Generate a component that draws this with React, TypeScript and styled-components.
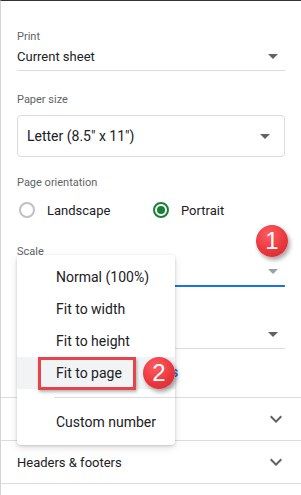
import React from 'react';
import styled, { createGlobalStyle } from 'styled-components';

const GlobalStyle = createGlobalStyle`
  body {
    margin: 0;
    background: #fff;
    font-family: Roboto, "Liberation Sans", Arial, sans-serif;
  }
`;

const Panel = styled.div`
  position: relative;
  width: 301px;
  height: 495px;
  box-sizing: border-box;
  border-top: 1px solid #333;
  border-left: 1px solid #d3d3d3;
  background: #fff;
  overflow: hidden;
  display: flex;
  flex-direction: column;
`;

const Settings = styled.div`
  padding: 28px 16px 0 16px;
`;

const Field = styled.div<{ $top?: number }>`
  margin-top: ${p => p.$top || 0}px;
`;

const Label = styled.div`
  font-size: 11px;
  line-height: 16px;
  color: #5f6368;
`;

const LineSelect = styled.div<{ $focused?: boolean }>`
  display: flex;
  align-items: center;
  justify-content: space-between;
  height: 22px;
  padding-bottom: 3px;
  border-bottom: ${p => (p.$focused ? '2px solid #1a73e8' : '1px solid #dadce0')};
  font-size: 13px;
  color: #202124;
`;

const BoxSelect = styled.div`
  margin-top: 7px;
  height: 42px;
  box-sizing: border-box;
  border: 1px solid #dadce0;
  border-radius: 4px;
  display: flex;
  align-items: center;
  justify-content: space-between;
  padding: 0 14px 0 9px;
  font-size: 14px;
  color: #202124;
`;

const Arrow = styled.span<{ $light?: boolean; $right?: number }>`
  width: 0;
  height: 0;
  margin-right: ${p => p.$right ?? 0}px;
  border-left: 5px solid transparent;
  border-right: 5px solid transparent;
  border-top: 5px solid ${p => (p.$light ? '#9aa0a6' : '#5f6368')};
`;

const RadioRow = styled.div`
  margin-top: 7px;
  height: 24px;
  display: flex;
  align-items: center;
`;

const RadioOption = styled.label`
  width: 134px;
  display: flex;
  align-items: center;
  gap: 12px;
  padding-left: 2px;
  font-size: 13px;
  color: #202124;
`;

const RadioCircle = styled.span<{ $checked?: boolean }>`
  width: 16px;
  height: 16px;
  box-sizing: border-box;
  border-radius: 50%;
  border: 2px solid ${p => (p.$checked ? '#188038' : '#bdc1c6')};
  display: flex;
  align-items: center;
  justify-content: center;
  &::after {
    content: '';
    display: ${p => (p.$checked ? 'block' : 'none')};
    width: 8px;
    height: 8px;
    border-radius: 50%;
    background: #188038;
  }
`;

const Link = styled.div`
  margin-top: 13px;
  line-height: 20px;
  font-size: 14px;
  font-weight: 500;
  color: #1a73e8;
  padding-left: 10px;
`;

const Sections = styled.div`
  margin-top: 15px;
`;

const SectionRow = styled.div`
  height: 43px;
  box-sizing: border-box;
  border-top: 1px solid #dadce0;
  display: flex;
  align-items: center;
  justify-content: space-between;
  padding: 0 13px 0 16px;
  font-size: 13px;
  color: #202124;
`;

const Menu = styled.div`
  position: absolute;
  left: 16px;
  top: 254px;
  width: 158px;
  padding: 6px 0 7px;
  background: #fff;
  border-radius: 4px;
  box-shadow: 0 1px 3px rgba(0, 0, 0, 0.18), 0 3px 8px rgba(0, 0, 0, 0.1);
`;

const MenuItem = styled.div<{ $active?: boolean }>`
  height: 32px;
  line-height: 32px;
  padding-left: 39px;
  font-size: 14px;
  color: #202124;
  background: ${p => (p.$active ? '#f1f3f4' : 'transparent')};
`;

const MenuDivider = styled.div`
  height: 1px;
  margin: 8px 0 8px 37px;
  background: #dadce0;
`;

const Highlight = styled.div`
  position: absolute;
  left: 37px;
  top: 356px;
  width: 98px;
  height: 33px;
  box-sizing: border-box;
  border: 3px solid #e6434b;
  box-shadow: 1px 2px 3px rgba(0, 0, 0, 0.3);
`;

const Badge = styled.div<{ $x: number; $y: number }>`
  position: absolute;
  left: ${p => p.$x}px;
  top: ${p => p.$y}px;
  width: 32px;
  height: 32px;
  border-radius: 50%;
  background: radial-gradient(circle at 40% 30%, #ff5b61 0%, #e8353c 60%, #d42a31 100%);
  box-shadow: 2px 3px 4px rgba(0, 0, 0, 0.35);
  color: #fff;
  font-family: "Liberation Sans", Arial, sans-serif;
  font-size: 24px;
  line-height: 32px;
  text-align: center;
`;

const Chevron = () => (
  <svg width="24" height="24" viewBox="0 0 24 24">
    <path d="M16.59 8.59L12 13.17 7.41 8.59 6 10l6 6 6-6z" fill="#5f6368" />
  </svg>
);

const App: React.FC = () => {
  return (
    <Panel>
      <GlobalStyle />
      <Settings>
        <Field>
          <Label>Print</Label>
          <LineSelect>
            Current sheet
            <Arrow $right={7} />
          </LineSelect>
        </Field>
        <Field $top={21}>
          <Label>Paper size</Label>
          <BoxSelect>
            Letter (8.5" x 11")
            <Arrow />
          </BoxSelect>
        </Field>
        <Field $top={18}>
          <Label>Page orientation</Label>
          <RadioRow>
            <RadioOption>
              <RadioCircle />
              Landscape
            </RadioOption>
            <RadioOption>
              <RadioCircle $checked />
              Portrait
            </RadioOption>
          </RadioRow>
        </Field>
        <Field $top={22}>
          <Label>Scale</Label>
          <LineSelect $focused>
            Normal (100%)
            <Arrow $light $right={7} />
          </LineSelect>
        </Field>
        <Field $top={20}>
          <Label>Margins</Label>
          <LineSelect>
            Normal
            <Arrow $right={7} />
          </LineSelect>
        </Field>
        <Link>Set custom page breaks</Link>
      </Settings>
      <Sections>
        <SectionRow>
          Formatting
          <Chevron />
        </SectionRow>
        <SectionRow>
          Headers &amp; footers
          <Chevron />
        </SectionRow>
        <SectionRow />
      </Sections>

      <Menu>
        <MenuItem>Normal (100%)</MenuItem>
        <MenuItem>Fit to width</MenuItem>
        <MenuItem>Fit to height</MenuItem>
        <MenuItem $active>Fit to page</MenuItem>
        <MenuDivider />
        <MenuItem>Custom number</MenuItem>
      </Menu>
      <Highlight />
      <Badge $x={255} $y={224}>1</Badge>
      <Badge $x={142} $y={356}>2</Badge>
    </Panel>
  );
};

export default App;
